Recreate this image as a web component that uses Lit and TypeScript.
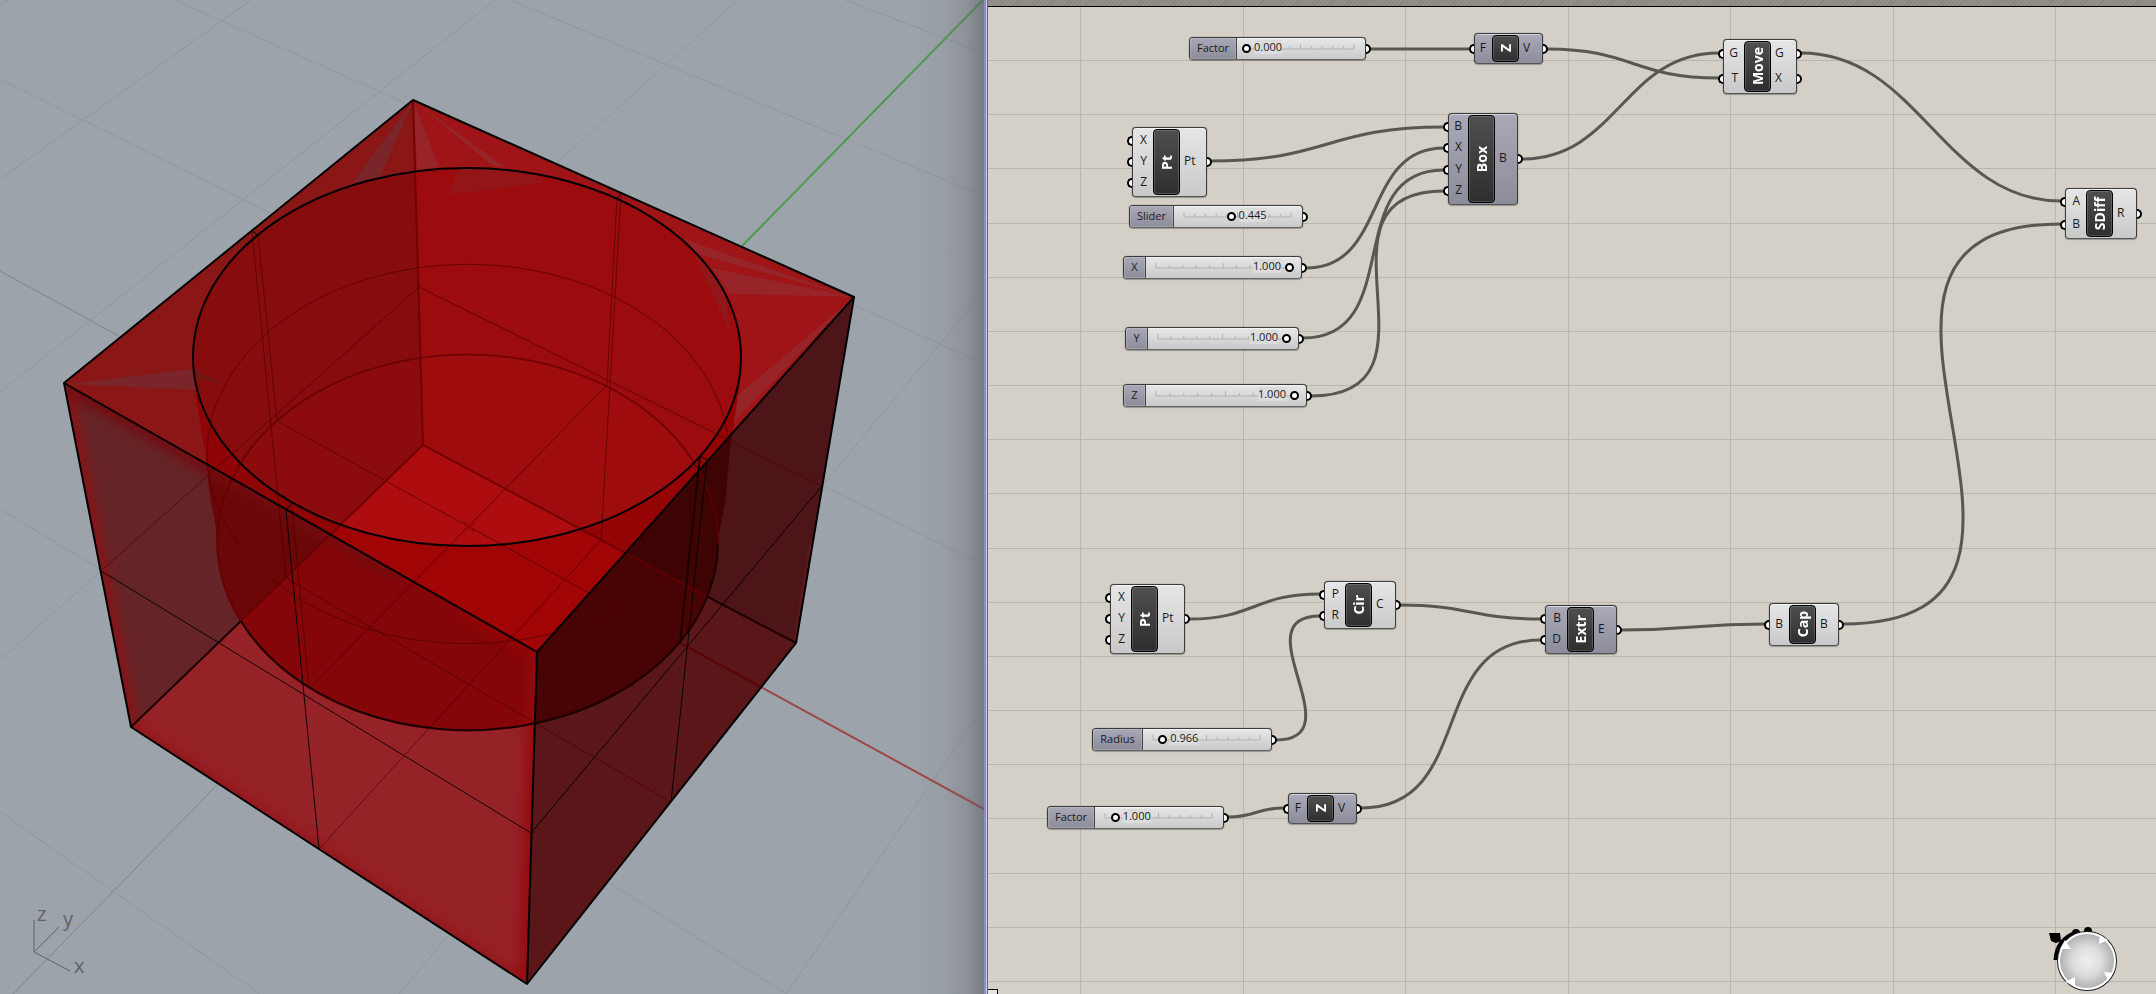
import { LitElement, html, svg, css } from "lit";
import { customElement, property } from "lit/decorators.js";
import { styleMap } from "lit/directives/style-map.js";

/* ---------- shared look ---------- */

const gripStyles = css`
  .grip {
    position: absolute;
    top: calc(50% - 5px);
    width: 5px;
    height: 10px;
    box-sizing: border-box;
    background: #fff;
    border: 2px solid #000;
  }
  .grip.in {
    right: 100%;
    border-right: 0;
    border-radius: 5px 0 0 5px;
  }
  .grip.out {
    left: 100%;
    border-left: 0;
    border-radius: 0 5px 5px 0;
  }
`;

/* ---------- 3D viewport ---------- */

type Face = { id: string; outline: string; left: string; right: string; floor: string; cylLeft: string; cylRight: string; cylFloor: string };

const WALL_LEFT = "413,100 64,383 131,727 423,445";
const WALL_RIGHT = "413,100 854,297 796,643 423,445";
const FLOOR = "423,445 796,643 527,984 131,727";
const TOP = "413,100 854,297 537,652 64,383";
const FRONT_LEFT = "64,383 537,652 527,984 131,727";
const FRONT_RIGHT = "537,652 854,297 796,643 527,984";
const CYLINDER =
  "M193 357 A274 189 0 0 1 742 357 C742 390 729 440 727 480 C726 510 718 530 718 543 A250 188 0 0 1 217 543 C217 520 208 500 208 475 C204 430 193 400 193 357 Z";

const FACES: Face[] = [
  { id: "top", outline: TOP, left: "#8b1616", right: "#9f1416", floor: "#a51114", cylLeft: "#8f0404", cylRight: "#940405", cylFloor: "#a00405" },
  { id: "fl", outline: FRONT_LEFT, left: "#652427", right: "#652427", floor: "#952227", cylLeft: "#6b0709", cylRight: "#6b0709", cylFloor: "#840608" },
  { id: "fr", outline: FRONT_RIGHT, left: "#4d1518", right: "#4d1518", floor: "#5a1618", cylLeft: "#3e0303", cylRight: "#3e0303", cylFloor: "#480304" },
];

const GROUND = [
  "M0 79 L270 213", "M175 0 L405 103", "M0 179 L251 0", "M0 392 L495 0", "M0 5 L8 0",
  "M510 0 L984 196", "M845 0 L984 53", "M738 0 L558 162", "M854 305 L984 364", "M984 291 L822 486",
  "M823 486 L984 565", "M0 509 L101 570", "M0 660 L101 571", "M0 812 L260 994", "M448 936 L399 994",
  "M608 882 L787 994", "M984 706 L786 994",
];

const HIDDEN_ISO = [
  "M252 231 L286 578", "M258 235 L277 421", "M621 194 L601 540", "M617 198 L607 385",
  "M101 571 L419 287 L822 486", "M286 578 L671 802", "M601 540 L319 849",
  "M277 421 L680 643", "M607 385 L309 689", "M292 505 L309 689",
  "M207 454 A260 189 0 0 1 729 454", "M207 454 A260 189 0 0 0 729 454",
];

const FRONT_ISO = [
  "M101 571 L531 833", "M286 510 L319 849", "M531 833 L822 486", "M707 460 L671 802",
  "M286 510 L292 503", "M707 460 L700 456", "M252 231 L258 235", "M621 194 L617 198",
];

const OUTER_EDGES = [
  "M413 100 L854 297 L537 652 L64 383 Z", "M64 383 L131 727 L527 984 L796 643 L854 297", "M537 652 L527 984",
];

@customElement("model-viewport")
export class ModelViewport extends LitElement {
  static styles = css`
    :host { display: block; position: relative; overflow: hidden; background: #9da3aa; min-width: 0; }
    .scene { display: block; width: 100%; height: 100%; }
    .axis-name { font: 20px "Open Sans", "Noto Sans", sans-serif; fill: #5f6266; }
    .edge-shade {
      position: absolute;
      inset: 0 0 0 auto;
      width: 72px;
      background: linear-gradient(to right, rgba(110, 110, 120, 0), rgba(110, 110, 120, 0.1) 45%, rgba(104, 105, 112, 0.3) 75%, rgba(96, 98, 104, 0.6));
    }
    .ground { fill: none; stroke: #90979d; stroke-width: 1; }
    .hidden-iso { fill: none; stroke: #4a0000; stroke-width: 1; opacity: 0.65; }
    .hidden-edge { fill: none; stroke: #640000; stroke-width: 2; opacity: 0.75; }
    .dark-edge { fill: none; stroke: #1c0000; stroke-width: 2; }
    .front-iso { fill: none; stroke: #000; stroke-width: 1; opacity: 0.9; }
    .edge { fill: none; stroke: #000; stroke-width: 2; stroke-linejoin: round; }
  `;

  private face(f: Face) {
    return svg`
      <g clip-path="url(#clip-${f.id})">
        <polygon points=${f.outline} fill=${f.floor}></polygon>
        <polygon points=${WALL_LEFT} fill=${f.left}></polygon>
        <polygon points=${WALL_RIGHT} fill=${f.right}></polygon>
        <g clip-path="url(#clip-cylinder)">
          <polygon points=${FLOOR} fill=${f.cylFloor}></polygon>
          <polygon points=${WALL_LEFT} fill=${f.cylLeft}></polygon>
          <polygon points=${WALL_RIGHT} fill=${f.cylRight}></polygon>
        </g>
      </g>`;
  }

  render() {
    return html`
      <svg class="scene" viewBox="0 0 984 994" preserveAspectRatio="xMidYMid slice" role="img" aria-label="Perspective view of the model">
        <defs>
          ${FACES.map((f) => svg`<clipPath id="clip-${f.id}"><polygon points=${f.outline}></polygon></clipPath>`)}
          <clipPath id="clip-cylinder"><path d=${CYLINDER}></path></clipPath>
          <clipPath id="clip-mouth"><ellipse cx="467" cy="357" rx="274" ry="189"></ellipse></clipPath>
          <filter id="soft" filterUnits="userSpaceOnUse" x="0" y="0" width="984" height="994" color-interpolation-filters="sRGB">
            <feGaussianBlur stdDeviation="6"></feGaussianBlur>
          </filter>
        </defs>

        ${GROUND.map((d) => svg`<path class="ground" d=${d}></path>`)}
        <path d="M0 271 L119 336 M217 785 L13 994" fill="none" stroke="#85828a" stroke-width="1"></path>
        <path d="M983 0 L742 246" stroke="#4c9a4c" stroke-width="2"></path>
        <path d="M761 687 L984 809" stroke="#9c4648" stroke-width="2"></path>

        ${FACES.map((f) => this.face(f))}

        <g clip-path="url(#clip-fl)">
          <g fill="none" filter="url(#soft)">
            <path d="M64 383 L131 727" stroke="#8c1216" stroke-width="14"></path>
            <path d="M64 383 L400 574" stroke="#740c10" stroke-width="16"></path>
            <path d="M131 727 L527 984" stroke="#94080c" stroke-width="5"></path>
            <path d="M537 652 L527 984" stroke="#960a0e" stroke-width="16"></path>
            <path d="M460 608 L537 652" stroke="#920406" stroke-width="16"></path>
          </g>
        </g>
        <path d="M813 540 L796 643" stroke="#7a1a20" stroke-width="6" opacity="0.5" clip-path="url(#clip-fr)"></path>

        <g clip-path="url(#clip-mouth)">
          <polygon points=${FLOOR} fill="#ad0e0f"></polygon>
          <polygon points=${WALL_LEFT} fill="#870c0e"></polygon>
          <polygon points=${WALL_RIGHT} fill="#9c0c0e"></polygon>
          <ellipse cx="468" cy="543" rx="251" ry="188" fill="#b00f10" opacity="0.15"></ellipse>
          <polygon points="457,171 470,160 520,160 545,182 500,189 449,194" fill="#931518"></polygon>
          <polygon points="690,245 725,290 731,335" fill="#92171a"></polygon>
          <polygon points="193,368 224,385 195,378" fill="#731515"></polygon>
        </g>
        <g>
          <polygon points="413,101 352,183 380,177" fill="#7a2529"></polygon>
          <polygon points="414,102 417,170 439,167" fill="#962428"></polygon>
          <polygon points="415,102 505,167 493,166" fill="#962428"></polygon>
          <polygon points="66,384 193,369 196,390" fill="#7a2529"></polygon>
          <polygon points="853,297 686,240 697,254" fill="#962428"></polygon>
          <polygon points="853,297 712,268 730,294" fill="#962428"></polygon>
          <polygon points="853,298 738,395 734,422" fill="#962428"></polygon>
        </g>

        <path d="M742 246 L606 385" stroke="#7a2c08" stroke-width="1" opacity="0.6"></path>
        <path d="M680 643 L761 687" stroke="#5a0508" stroke-width="2"></path>

        ${HIDDEN_ISO.map((d) => svg`<path class="hidden-iso" d=${d}></path>`)}
        <path class="hidden-edge" d="M413 100 L423 445 L241 621 M423 445 L708 597"></path>
        <path class="hidden-edge" d="M217 543 A250 188 0 0 1 718 543"></path>
        <path class="dark-edge" d="M241 621 A250 188 0 0 0 718 543 M241 621 L131 727 M708 597 L796 643 M700 456 L680 643"></path>
        <path class="hidden-edge" d="M217 543 Q218 585 241 621"></path>
        <path d="M464 522 L474 531 M474 522 L464 531" stroke="#960404" stroke-width="3"></path>

        ${FRONT_ISO.map((d) => svg`<path class="front-iso" d=${d}></path>`)}
        <ellipse class="edge" cx="467" cy="357" rx="274" ry="189"></ellipse>
        ${OUTER_EDGES.map((d) => svg`<path class="edge" d=${d}></path>`)}

        <path d="M34 920 V952 L59 927 M34 952 L70 971" fill="none" stroke="#5f6266" stroke-width="1"></path>
        <text class="axis-name" x="37" y="921">z</text>
        <text class="axis-name" x="63" y="926">y</text>
        <text class="axis-name" x="74" y="973">x</text>
      </svg>
      <div class="edge-shade"></div>
    `;
  }
}

/* ---------- component on the graph canvas ---------- */

@customElement("graph-component")
export class GraphComponent extends LitElement {
  @property() name = "";
  @property({ type: Array }) inputs: string[] = [];
  @property({ type: Array }) outputs: string[] = [];
  @property({ type: Boolean }) muted = false;

  static styles = [
    gripStyles,
    css`
      :host { display: block; color: #1a1a1a; font: 12px/14px "Open Sans", "Noto Sans", sans-serif; }
      .body {
        box-sizing: border-box;
        height: 100%;
        display: grid;
        grid-template-columns: var(--in-width) 27px 1fr;
        border: 1px solid #3c3c3c;
        border-bottom-color: #555;
        border-radius: 4px;
        padding: 1px 0;
        background: linear-gradient(#e6e6e6, #c9c9c9);
        box-shadow: inset 0 1px 0 rgba(255, 255, 255, 0.5), 0 0 1px #555, 0 1px 1px rgba(0, 0, 0, 0.25);
      }
      .body.muted { background: linear-gradient(#aaa9b8, #8d8c9b); }
      .ports { display: flex; flex-direction: column; margin: 1px 0; padding: 0; list-style: none; }
      .port { flex: 1; position: relative; display: flex; align-items: center; padding-bottom: 2px; }
      .ports.left .port { justify-content: flex-end; padding-right: 6px; }
      .ports.right .port { padding-left: 4px; }
      .port .grip.in { right: calc(100% + 1px); }
      .port .grip.out { left: calc(100% + 1px); }
      .tag {
        display: flex;
        align-items: center;
        justify-content: center;
        border: 1px solid #000;
        border-radius: 4px;
        color: #fff;
        background: linear-gradient(#4f4f4f, #2e2e2e);
        box-shadow: inset 0 0 0 1px rgba(255, 255, 255, 0.16);
        overflow: hidden;
      }
      .tag-text { writing-mode: vertical-rl; transform: rotate(180deg); font-weight: 700; font-size: 14px; line-height: 20px; }
    `,
  ];

  render() {
    return html`
      <div class="body ${this.muted ? "muted" : ""}">
        <ul class="ports left">
          ${this.inputs.map((p) => html`<li class="port"><i class="grip in"></i>${p}</li>`)}
        </ul>
        <div class="tag"><span class="tag-text">${this.name}</span></div>
        <ul class="ports right">
          ${this.outputs.map((p) => html`<li class="port">${p}<i class="grip out"></i></li>`)}
        </ul>
      </div>
    `;
  }
}

/* ---------- number slider on the graph canvas ---------- */

@customElement("number-slider")
export class NumberSlider extends LitElement {
  @property() label = "";
  @property({ type: Number }) value = 0;
  @property({ type: Number }) max = 1;

  static styles = [
    gripStyles,
    css`
      :host { display: block; color: #1a1a1a; font: 11px/14px "Open Sans", "Noto Sans", sans-serif; }
      .body {
        position: relative;
        box-sizing: border-box;
        height: 23px;
        display: flex;
        border: 1px solid #3c3c3c;
        border-bottom-color: #666;
        border-radius: 4px;
        background: linear-gradient(#e8e8e8, #c9c9c9);
        box-shadow: inset 0 1px 0 rgba(255, 255, 255, 0.5), 0 0 1px #555, 0 1px 1px rgba(0, 0, 0, 0.25);
      }
      .name {
        box-sizing: border-box;
        display: flex;
        align-items: center;
        justify-content: center;
        width: var(--label-width);
        padding-bottom: 2px;
        border-right: 1px solid #444;
        border-radius: 3px 0 0 3px;
        background: linear-gradient(#a9a8b8, #8d8c9b);
        box-shadow: inset 0 0 0 1px rgba(255, 255, 255, 0.15);
      }
      .rail { flex: 1; position: relative; margin: 0 11px 0 10px; }
      .ticks { position: absolute; left: 0; top: 5px; width: 100%; height: 7px; overflow: visible; }
      .range {
        position: absolute;
        left: -5px;
        top: 6px;
        width: calc(100% + 9px);
        height: 9px;
        margin: 0;
        appearance: none;
        background: transparent;
      }
      .range::-webkit-slider-thumb {
        appearance: none;
        box-sizing: border-box;
        width: 9px;
        height: 9px;
        border: 2px solid #000;
        border-radius: 50%;
        background: #fff;
      }
      .value { position: absolute; top: 2px; background: #dcdcdc; }
      .value.after { left: calc(var(--at) + 7px); }
      .value.before { right: calc(100% - var(--at) + 9px); }
      .body .grip.out { left: calc(100% + 1px); }
    `,
  ];

  render() {
    const ratio = this.value / this.max;
    const ticks = Array.from({ length: 11 }, (_, i) => i);
    return html`
      <div class="body">
        <label class="name" for="range">${this.label}</label>
        <div class="rail" style=${styleMap({ "--at": `${ratio * 100}%` })}>
          <svg class="ticks" viewBox="0 0 100 7" preserveAspectRatio="none" aria-hidden="true">
            <g stroke="#b2b2b2" fill="none">
              <path d="M0 6 H100" vector-effect="non-scaling-stroke"></path>
              ${ticks.map((i) => svg`<path d="M${i * 10} 6 V${i % 5 ? 3 : 1}" vector-effect="non-scaling-stroke"></path>`)}
            </g>
          </svg>
          <output class="value ${ratio === 1 ? "before" : "after"}" for="range">${this.value.toFixed(3)}</output>
          <input class="range" id="range" type="range" min="0" max=${this.max} step="0.001" .value=${String(this.value)} />
        </div>
        <i class="grip out"></i>
      </div>
    `;
  }
}

/* ---------- graph canvas ---------- */

type Component = { name: string; x: number; y: number; w: number; h: number; inWidth: number; inputs: string[]; outputs: string[]; muted?: boolean };
type Slider = { label: string; x: number; y: number; w: number; labelWidth: number; value: number; max: number };
type Wire = { from: [number, number]; to: [number, number]; bend: number };

const COMPONENTS: Component[] = [
  { name: "Z", x: 486, y: 33, w: 69, h: 31, inWidth: 17, inputs: ["F"], outputs: ["V"], muted: true },
  { name: "Move", x: 735, y: 39, w: 74, h: 55, inWidth: 20, inputs: ["G", "T"], outputs: ["G", "X"] },
  { name: "Pt", x: 144, y: 127, w: 75, h: 70, inWidth: 20, inputs: ["X", "Y", "Z"], outputs: ["Pt"] },
  { name: "Box", x: 460, y: 113, w: 70, h: 92, inWidth: 19, inputs: ["B", "X", "Y", "Z"], outputs: ["B"], muted: true },
  { name: "SDiff", x: 1077, y: 188, w: 72, h: 51, inWidth: 20, inputs: ["A", "B"], outputs: ["R"] },
  { name: "Pt", x: 122, y: 584, w: 75, h: 70, inWidth: 20, inputs: ["X", "Y", "Z"], outputs: ["Pt"] },
  { name: "Cir", x: 336, y: 581, w: 72, h: 48, inWidth: 20, inputs: ["P", "R"], outputs: ["C"] },
  { name: "Extr", x: 557, y: 605, w: 72, h: 49, inWidth: 21, inputs: ["B", "D"], outputs: ["E"], muted: true },
  { name: "Cap", x: 781, y: 603, w: 70, h: 43, inWidth: 19, inputs: ["B"], outputs: ["B"] },
  { name: "Z", x: 300, y: 793, w: 69, h: 31, inWidth: 18, inputs: ["F"], outputs: ["V"], muted: true },
];

const SLIDERS: Slider[] = [
  { label: "Factor", x: 201, y: 37, w: 177, labelWidth: 47, value: 0, max: 10 },
  { label: "Slider", x: 141, y: 205, w: 174, labelWidth: 44, value: 0.445, max: 1 },
  { label: "X", x: 135, y: 256, w: 179, labelWidth: 22, value: 1, max: 1 },
  { label: "Y", x: 137, y: 327, w: 174, labelWidth: 22, value: 1, max: 1 },
  { label: "Z", x: 135, y: 384, w: 184, labelWidth: 22, value: 1, max: 1 },
  { label: "Radius", x: 104, y: 728, w: 180, labelWidth: 50, value: 0.966, max: 10 },
  { label: "Factor", x: 59, y: 806, w: 177, labelWidth: 47, value: 1, max: 10 },
];

const WIRES: Wire[] = [
  { from: [382, 49], to: [482, 49], bend: 50 },
  { from: [559, 49], to: [731, 78], bend: 86 },
  { from: [534, 159], to: [731, 53], bend: 95 },
  { from: [813, 53], to: [1073, 201], bend: 118 },
  { from: [223, 161], to: [456, 127], bend: 117 },
  { from: [318, 268], to: [456, 148], bend: 82 },
  { from: [315, 338], to: [456, 170], bend: 104 },
  { from: [323, 396], to: [456, 191], bend: 146 },
  { from: [201, 619], to: [332, 594], bend: 66 },
  { from: [288, 740], to: [332, 616], bend: 80 },
  { from: [412, 605], to: [553, 619], bend: 70 },
  { from: [373, 808], to: [553, 640], bend: 116 },
  { from: [240, 817], to: [296, 808], bend: 28 },
  { from: [633, 630], to: [777, 624], bend: 72 },
  { from: [855, 624], to: [1073, 224], bend: 286 },
];

const wirePath = ({ from: [x0, y0], to: [x1, y1], bend }: Wire) =>
  `M${x0} ${y0} C${x0 + bend} ${y0} ${x1 - bend} ${y1} ${x1} ${y1}`;

const GRID_X = Array.from({ length: 7 }, (_, i) => Math.round(92 + (i * 975) / 6));
const GRID_Y = Array.from({ length: 18 }, (_, i) => Math.round(60 + (i * 921) / 17));

@customElement("graph-canvas")
export class GraphCanvas extends LitElement {
  static styles = css`
    :host { display: block; position: relative; overflow: hidden; background: #d4d0c8; min-width: 0; }
    .sheet { position: absolute; inset: 0; width: 100%; height: 100%; }
    .grid { stroke: #b9b6ae; stroke-width: 1; shape-rendering: crispEdges; }
    .wire { fill: none; stroke: #585752; stroke-width: 3; }
    .topbar {
      position: relative;
      height: 6px;
      border-bottom: 1px solid #000;
      background: repeating-linear-gradient(135deg, #85857e 0 1px, #92928a 1px 3px);
    }
    .item { position: absolute; }
    .compass { position: absolute; right: 36px; bottom: 0; width: 72px; height: 70px; }
    .corner {
      position: absolute;
      left: 0;
      bottom: 0;
      width: 9px;
      height: 4px;
      border: solid #000;
      border-width: 1px 1px 0 0;
      background: #e4e4e4;
    }
  `;

  render() {
    return html`
      <div class="topbar"></div>
      <svg class="sheet" aria-hidden="true">
        ${GRID_X.map((x) => svg`<line class="grid" x1=${x} x2=${x} y1="7" y2="100%"></line>`)}
        ${GRID_Y.map((y) => svg`<line class="grid" x1="0" x2="100%" y1=${y} y2=${y}></line>`)}
        ${WIRES.map((w) => svg`<path class="wire" d=${wirePath(w)}></path>`)}
      </svg>
      ${COMPONENTS.map(
        (c) => html`<graph-component
          class="item"
          style=${styleMap({ left: `${c.x}px`, top: `${c.y}px`, width: `${c.w}px`, height: `${c.h}px`, "--in-width": `${c.inWidth}px` })}
          .name=${c.name}
          .inputs=${c.inputs}
          .outputs=${c.outputs}
          .muted=${Boolean(c.muted)}
        ></graph-component>`
      )}
      ${SLIDERS.map(
        (s) => html`<number-slider
          class="item"
          style=${styleMap({ left: `${s.x}px`, top: `${s.y}px`, width: `${s.w}px`, "--label-width": `${s.labelWidth}px` })}
          .label=${s.label}
          .value=${s.value}
          .max=${s.max}
        ></number-slider>`
      )}
      <svg class="compass" viewBox="0 0 72 70" role="img" aria-label="Canvas compass">
        <defs>
          <radialGradient id="ball"><stop offset="0" stop-color="#f0f0f0"></stop><stop offset="0.5" stop-color="#dcdcdc"></stop><stop offset="1" stop-color="#ababab"></stop></radialGradient>
        </defs>
        <path d="M1 9 L12 9 L13 17 L8 19 L3 17 Z" fill="#000"></path>
        <path d="M8 36 Q9 16 28 9" fill="none" stroke="#000" stroke-width="5"></path>
        <circle cx="28" cy="9" r="4"></circle>
        <circle cx="40" cy="7" r="4"></circle>
        <circle cx="39" cy="37" r="29" fill="url(#ball)" stroke="#222" stroke-width="2"></circle>
        <circle cx="39" cy="37" r="28" fill="none" stroke="#fff" stroke-width="2"></circle>
        <path d="M17 16 L23 25 L12 25 Z M52 11 L60 16 L51 20 Z M56 48 L65 49 L60 57 Z M17 58 L27 53 L27 62 Z" fill="#fff"></path>
      </svg>
      <div class="corner"></div>
    `;
  }
}

/* ---------- page ---------- */

@customElement("app-root")
export class AppRoot extends LitElement {
  static styles = css`
    :host { display: grid; grid-template-columns: 984fr 4px 1168fr; height: 100vh; }
    .splitter {
      box-sizing: border-box;
      background: linear-gradient(to right, #8b8bd6 0 2px, #c9c8d4 2px 3px, #6c6b66 3px 4px);
    }
  `;

  render() {
    return html`
      <model-viewport></model-viewport>
      <div class="splitter"></div>
      <graph-canvas></graph-canvas>
    `;
  }
}
